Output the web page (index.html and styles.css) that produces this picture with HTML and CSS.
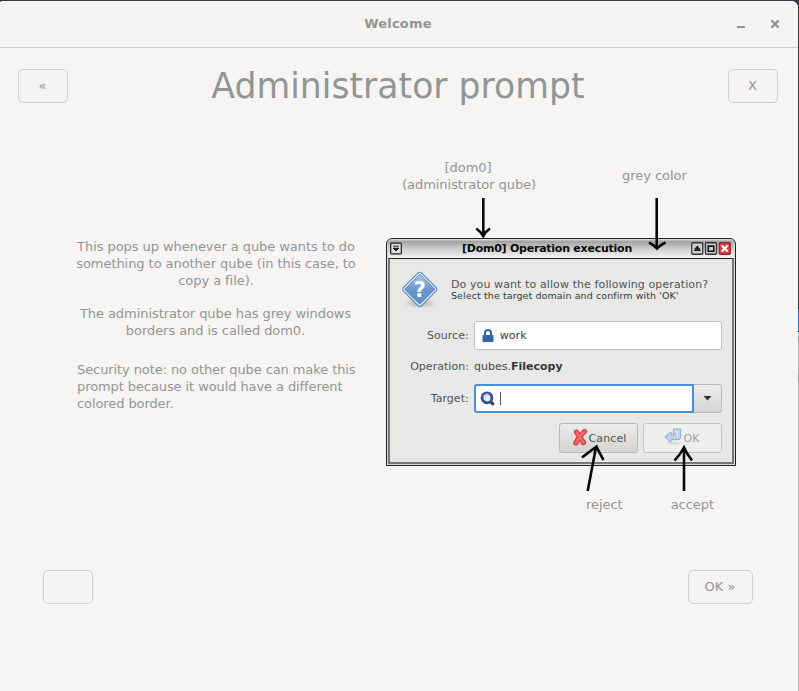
FILE: index.html
```html
<!DOCTYPE html>
<html lang="en">
<head>
<meta charset="utf-8">
<title>Welcome</title>
<link rel="stylesheet" href="styles.css">
</head>
<body>
<div class="window">
  <header class="titlebar">
    <span class="titlebar-text">Welcome</span>
    <div class="controls">
      <svg width="10" height="10" viewBox="0 0 10 10"><path d="M1 8h8" stroke="#929595" stroke-width="2"/></svg>
      <svg width="10" height="10" viewBox="0 0 10 10"><path d="M1.400 1.400l7.200 7.200M8.600 1.400l-7.200 7.200" stroke="#929595" stroke-width="2.200"/></svg>
    </div>
  </header>
  <div class="heading">
    <button class="btn">«</button>
    <h1>Administrator prompt</h1>
    <button class="btn">X</button>
  </div>
  <main class="content">
    <section class="copy">
      <p class="center">This pops up whenever a qube wants to do<br>something to another qube (in this case, to<br>copy a file).</p>
      <p class="center second">The administrator qube has grey windows<br>borders and is called dom0.</p>
      <p class="note">Security note: no other qube can make this<br>prompt because it would have a different<br>colored border.</p>
    </section>
    <section class="figure">
      <div class="labels top">
        <span class="label-dom">[dom0]<br>(administrator qube)</span>
        <span class="label-grey">grey color</span>
      </div>
      <div class="dialog">
        <div class="dialog-bar">
          <svg width="12" height="13" viewBox="0 0 13 13"><rect x=".75" y=".75" width="11.500" height="11.500" rx="1" fill="#ddd" stroke="#222" stroke-width="1.300"/><path d="M3.500 4h6M3.500 6.200h6L6.500 9z" fill="#111" stroke="#111" stroke-width="1"/></svg>
          <span class="dialog-title">[Dom0] Operation execution</span>
          <svg width="41" height="13" viewBox="0 0 41 13">
            <g stroke="#333" stroke-width="1.300"><rect x="1.750" y=".75" width="11" height="11.500" rx="1" fill="#ccc"/><rect x="15.500" y=".75" width="11" height="11.500" rx="1" fill="#ccc"/><rect x="29.250" y=".75" width="11" height="11.500" rx="1" fill="#d8454b" stroke="#8c2930"/></g>
            <path d="M4.300 7l3-3.500 3 3.500zM4.300 7.300h6v1.700h-6z" fill="#111"/>
            <path d="M18.200 4h5.600v5.300h-5.600zM17.500 4.300h7" fill="none" stroke="#111" stroke-width="1.500"/>
            <path d="M31.700 3.500l6 6M37.700 3.500l-6 6" stroke="#fff" stroke-width="2"/>
          </svg>
        </div>
        <div class="dialog-body">
          <div class="question">
            <svg width="38" height="40" viewBox="0 0 38 40">
              <defs>
                <linearGradient id="blue" x1="0" y1="0" x2="1" y2="1"><stop offset="0" stop-color="#b0cbea"/><stop offset=".5" stop-color="#6b97ca"/><stop offset="1" stop-color="#5f90c8"/></linearGradient>
                <radialGradient id="shade"><stop offset="0" stop-color="#777" stop-opacity=".5"/><stop offset="1" stop-color="#777" stop-opacity="0"/></radialGradient>
              </defs>
              <ellipse cx="19" cy="32" rx="17" ry="6" fill="url(#shade)"/>
              <rect x="6" y="5.500" width="25.500" height="25.500" rx="2.500" transform="rotate(45 18.750 18.250)" fill="#fff" stroke="#5f8dc1" stroke-width="1.200"/>
              <rect x="8" y="7.500" width="21.500" height="21.500" rx="1" transform="rotate(45 18.750 18.250)" fill="url(#blue)" stroke="#4a7ab5" stroke-width=".8"/>
              <text x="18.900" y="25.500" class="qmark" text-anchor="middle">?</text>
            </svg>
            <div class="question-text"><div class="q-main">Do you want to allow the following operation?</div><div class="q-sub">Select the target domain and confirm with 'OK'</div></div>
          </div>
          <div class="row source">
            <span class="key">Source:</span>
            <div class="field"><svg width="12" height="14" viewBox="0 0 12 14"><path d="M3 7V4a3 3 0 0 1 6 0v3" fill="none" stroke="#3465a4" stroke-width="2"/><rect x=".5" y="6" width="11" height="7" rx=".5" fill="#3465a4"/></svg><span>work</span></div>
          </div>
          <div class="row operation"><span class="key">Operation:</span><span class="value">qubes.<b>Filecopy</b></span></div>
          <div class="row target">
            <span class="key">Target:</span>
            <div class="entry"><svg width="15" height="15" viewBox="0 0 15 15"><path d="M10.500 10.500l2.300 2.300" stroke="#444" stroke-width="3.200" stroke-linecap="round"/><circle cx="7" cy="6.800" r="5" fill="#e4e9f7" stroke="#3c4c91" stroke-width="2.800"/><path d="M2.700 6a4.500 4.500 0 0 1 6.500-3" fill="none" stroke="#7c8bc8"/></svg><i class="caret"></i></div>
            <div class="drop"><svg width="9" height="5" viewBox="0 0 9 5"><path d="M.5 0h8l-4 4.500z" fill="#2e3436"/></svg></div>
          </div>
          <div class="actions">
            <div class="action"><svg width="16" height="17" viewBox="0 0 16 17"><ellipse cx="8" cy="15" rx="7" ry="1.500" fill="#ccc"/><path d="M4.500 3Q6 6 7.500 8T11.500 13.500M12.500 2.500Q9 6 7.500 8T3.800 14" fill="none" stroke="#c9282d" stroke-width="5" stroke-linecap="round"/><path d="M4.500 3Q6 6 7.500 8T11.500 13.500M12.500 2.500Q9 6 7.500 8T3.800 14" fill="none" stroke="#f16669" stroke-width="3.200" stroke-linecap="round"/></svg><span>Cancel</span></div>
            <div class="action ok"><svg width="18" height="18" viewBox="0 0 18 18"><ellipse cx="9" cy="15.500" rx="7" ry="1.500" fill="#ddd"/><path d="M.8 9l6.200-5v2.700h4V6H9.500V1h7.200v8q0 2.700-2.700 2.700H7v3z" fill="#bfd2e9" stroke="#91add1" stroke-linejoin="round"/><path d="M12 2.200V4h1.600v4" fill="none" stroke="#eef4fb"/></svg><span>OK</span></div>
          </div>
        </div>
      </div>
      <div class="labels bottom"><span>reject</span><span>accept</span></div>
      <svg class="arrows" width="350" height="340" viewBox="386 160 350 340" fill="none" stroke="#080808" stroke-width="2.600">
        <path d="M483.300 198V236M476.300 228.500Q481 232 483.300 236Q485 232 490 228.500"/>
        <path d="M656.700 198V248M649 242.500Q654 245 657 248.500Q660 245 665.500 242.500"/>
        <path d="M587.700 491L596 447M582 457.500Q589 452 596.500 446.500Q599 452 603.500 460"/>
        <path d="M684 491V448M674.500 460.500Q680 455 684 447.500Q687 454 692 460.500"/>
      </svg>
    </section>
  </main>
  <footer class="footer"><button class="btn"></button><button class="btn next">OK »</button></footer>
</div>
<aside class="desktop"></aside>
</body>
</html>
```
FILE: styles.css
```css
* { box-sizing: border-box; }
body {
  margin: 0;
  width: 799px;
  height: 691px;
  padding-top: 1px;
  display: flex;
  overflow: hidden;
  background: linear-gradient(#343947 48px, #b5b5b4 48px);
  font: 13px/17px "DejaVu Sans", sans-serif;
  letter-spacing: -.04px;
  color: #929595;
}
p, h1 { margin: 0; font-weight: normal; }
svg { display: block; flex: none; }
.window {
  width: 798px;
  height: 690px;
  display: flex;
  flex-direction: column;
  background: #f6f5f3;
  border-radius: 3px 7px 0 0;
}
.desktop {
  width: 1px;
  height: 690px;
  background: linear-gradient(#343947 307px, #000 307px 308px, #2b74d0 308px 330px, #000 330px 331px, #c5c1bb 331px 335px, #aaa299 335px 342px, #b5b5b8 342px 374px, #aaa299 374px 382px, #b5b5b4 382px);
}
.titlebar {
  position: relative;
  height: 47px;
  display: flex;
  align-items: center;
  justify-content: center;
  border-bottom: 1px solid #d0d0cf;
  background: #f5f4f2;
  border-radius: 3px 7px 0 0;
  box-shadow: inset 0 1px #fff;
}
.titlebar-text { font-weight: bold; letter-spacing: .2px; padding: 0 2px 1px 0; }
.controls { position: absolute; right: 18px; top: 18px; display: flex; gap: 24px; }
.heading {
  height: 76px;
  padding: 0 20px 0 18px;
  display: flex;
  align-items: center;
  justify-content: space-between;
}
h1 { font-size: 34.67px; line-height: 42px; letter-spacing: 0; }
.btn {
  width: 50px;
  height: 34px;
  padding: 0 1px 1px 0;
  border: 1px solid #d0d0ce;
  border-radius: 5px;
  background: #f5f4f2;
  font: inherit;
  color: inherit;
}
.next { width: 65px; }
.content { display: flex; height: 446px; padding-left: 66px; }
.copy { width: 300px; padding-top: 114px; margin-right: 20px; white-space: nowrap; letter-spacing: -.06px; }
.center { text-align: center; }
.second { margin-top: 16px; padding-right: 1px; }
.note { margin: 22px 0 0 11px; letter-spacing: -.09px; }
.figure { position: relative; width: 350px; padding-top: 35px; }
.labels { display: flex; }
.top { height: 79px; }
.label-dom { width: 132px; margin-left: 16px; text-align: center; white-space: nowrap; }
.label-grey { margin: 8px 0 0 88px; }
.bottom { padding: 30px 0 0 200px; gap: 48px; }
.arrows { position: absolute; left: 0; top: 36px; }
.dialog {
  width: 350px;
  height: 228px;
  padding: 0 1px 1px;
  border: 1px solid #202124;
  border-radius: 6px 6px 0 0;
  background: #d9d9d8;
  font-size: 11px;
  line-height: 14px;
  letter-spacing: .04px;
  color: #4f5456;
}
.dialog-bar {
  height: 19px;
  padding: 0 3px 0 2px;
  display: flex;
  align-items: center;
  background: linear-gradient(#d8d8d6 1px, #a0a19e 2px, #ccccca 50%, #f4f4f3);
  border-radius: 5px 5px 0 0;
}
.dialog-title { flex: 1; padding-left: 2px; text-align: center; font-weight: bold; letter-spacing: -.24px; color: #080808; white-space: nowrap; }
.dialog-body {
  height: 206px;
  padding: 12px 10px 0 11px;
  border: 2px solid #777979;
  border-top: 1px solid #222;
  background: #e8e8e6;
}
.question { display: flex; height: 50px; }
.question-text { padding: 7px 0 0 12px; white-space: nowrap; }
.q-main { height: 12px; letter-spacing: .1px; }
.q-sub { font-size: 9.5px; line-height: 12px; letter-spacing: .09px; color: #34393b; }
.qmark { font: bold 21px "DejaVu Sans", sans-serif; fill: #fff; }
.row { display: flex; align-items: center; }
.key { width: 68px; margin-right: 5px; text-align: right; }
.source, .target { height: 29px; }
.operation { height: 34px; }
.field, .entry { height: 29px; display: flex; align-items: center; background: #fff; padding-left: 7px; }
.field { width: 249px; gap: 6px; border: 1px solid #c1c1bf; border-radius: 3px; color: #34393b; }
.value { color: #454a4c; letter-spacing: 0; }
.value b { color: #34393b; }
.entry { width: 221px; padding-left: 4px; border: 2px solid #4a90d9; border-radius: 3px 0 0 3px; }
.caret { width: 1px; height: 13px; margin-left: 5px; background: #555; }
.drop { width: 28px; height: 29px; display: flex; align-items: center; justify-content: center; border: 1px solid #b8b8b6; border-left: 0; border-radius: 0 3px 3px 0; background: linear-gradient(#ededec, #d4d4d2); }
.actions { display: flex; justify-content: flex-end; gap: 5px; padding-top: 10px; }
.action { width: 79px; height: 30px; display: flex; align-items: center; justify-content: center; gap: 1px; border: 1px solid #b8b8b6; border-radius: 3px; background: linear-gradient(#ececeb, #d4d4d2); letter-spacing: .1px; padding-left: 1px; }
.action svg { margin-top: -2px; }
.action span { padding-top: 2px; }
.ok { background: #efefee; border-color: #c5c5c3; color: #9c9e9f; padding: 0 1px 0 0; }
.footer { display: flex; justify-content: space-between; padding: 0 45px 0 43px; }
```
